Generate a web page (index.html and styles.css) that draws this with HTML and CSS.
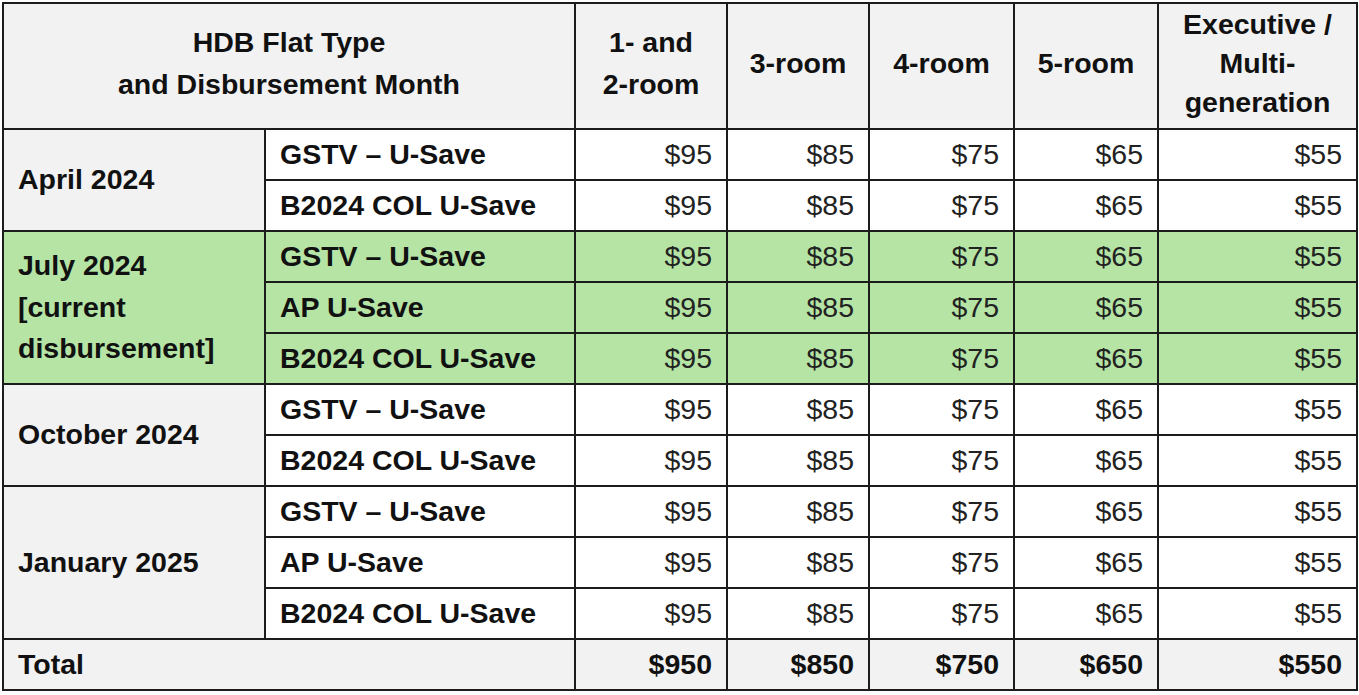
FILE: index.html
```html
<!DOCTYPE html>
<html>
<head>
<meta charset="utf-8">
<link rel="stylesheet" href="styles.css">
</head>
<body>
<table class="grid">
  <colgroup>
    <col class="c-month"><col class="c-type"><col class="c-1"><col class="c-3"><col class="c-4"><col class="c-5"><col class="c-e">
  </colgroup>
  <thead>
    <tr class="head">
      <th colspan="2">HDB Flat Type<br>and Disbursement Month</th>
      <th>1- and<br>2-room</th>
      <th>3-room</th>
      <th>4-room</th>
      <th>5-room</th>
      <th class="exec">Executive /<br>Multi-<br>generation</th>
    </tr>
  </thead>
  <tbody>
    <tr>
      <td class="month" rowspan="2">April 2024</td>
      <td class="type">GSTV – U-Save</td>
      <td class="num">$95</td><td class="num">$85</td><td class="num">$75</td><td class="num">$65</td><td class="num">$55</td>
    </tr>
    <tr>
      <td class="type">B2024 COL U-Save</td>
      <td class="num">$95</td><td class="num">$85</td><td class="num">$75</td><td class="num">$65</td><td class="num">$55</td>
    </tr>
    <tr class="cur">
      <td class="month" rowspan="3">July 2024<br>[current<br>disbursement]</td>
      <td class="type">GSTV – U-Save</td>
      <td class="num">$95</td><td class="num">$85</td><td class="num">$75</td><td class="num">$65</td><td class="num">$55</td>
    </tr>
    <tr class="cur">
      <td class="type">AP U-Save</td>
      <td class="num">$95</td><td class="num">$85</td><td class="num">$75</td><td class="num">$65</td><td class="num">$55</td>
    </tr>
    <tr class="cur">
      <td class="type">B2024 COL U-Save</td>
      <td class="num">$95</td><td class="num">$85</td><td class="num">$75</td><td class="num">$65</td><td class="num">$55</td>
    </tr>
    <tr>
      <td class="month" rowspan="2">October 2024</td>
      <td class="type">GSTV – U-Save</td>
      <td class="num">$95</td><td class="num">$85</td><td class="num">$75</td><td class="num">$65</td><td class="num">$55</td>
    </tr>
    <tr>
      <td class="type">B2024 COL U-Save</td>
      <td class="num">$95</td><td class="num">$85</td><td class="num">$75</td><td class="num">$65</td><td class="num">$55</td>
    </tr>
    <tr>
      <td class="month" rowspan="3">January 2025</td>
      <td class="type">GSTV – U-Save</td>
      <td class="num">$95</td><td class="num">$85</td><td class="num">$75</td><td class="num">$65</td><td class="num">$55</td>
    </tr>
    <tr>
      <td class="type">AP U-Save</td>
      <td class="num">$95</td><td class="num">$85</td><td class="num">$75</td><td class="num">$65</td><td class="num">$55</td>
    </tr>
    <tr>
      <td class="type">B2024 COL U-Save</td>
      <td class="num">$95</td><td class="num">$85</td><td class="num">$75</td><td class="num">$65</td><td class="num">$55</td>
    </tr>
    <tr class="total">
      <td colspan="2" class="total-label">Total</td>
      <td class="num">$950</td><td class="num">$850</td><td class="num">$750</td><td class="num">$650</td><td class="num">$550</td>
    </tr>
  </tbody>
</table>
</body>
</html>
```
FILE: styles.css
```css
html, body {
  margin: 0;
  padding: 0;
  background: #ffffff;
}
body {
  padding: 2px 0 0 2px;
  font-family: "Liberation Sans", Arial, sans-serif;
  color: #111111;
}
.grid {
  border-collapse: collapse;
  table-layout: fixed;
  width: 1354px;
  font-size: 28.5px;
}
.c-month { width: 262px; }
.c-type { width: 310px; }
.c-1 { width: 152px; }
.c-3 { width: 142px; }
.c-4 { width: 145px; }
.c-5 { width: 144px; }
.c-e { width: 199px; }
.grid th, .grid td {
  border: 2px solid #1c1c1c;
  padding: 0 14px;
  line-height: 41.5px;
}
.head th {
  height: 118px;
  background: #f2f2f2;
  font-weight: bold;
  text-align: center;
  vertical-align: middle;
  padding: 0 4px 6px;
  line-height: 42px;
}
.head th.exec {
  line-height: 39px;
}
.grid tbody td {
  height: 49px;
}
.month {
  background: #f2f2f2;
  font-weight: bold;
  text-align: left;
  vertical-align: middle;
}
.type {
  font-weight: bold;
  background: #ffffff;
}
.num {
  text-align: right;
  color: #222222;
  background: #ffffff;
}
.cur td, .cur .month, .cur .type, .cur .num {
  background: #b5e4a5;
}
.total td {
  background: #f2f2f2;
  font-weight: bold;
}
.total .num {
  color: #111111;
}
```
